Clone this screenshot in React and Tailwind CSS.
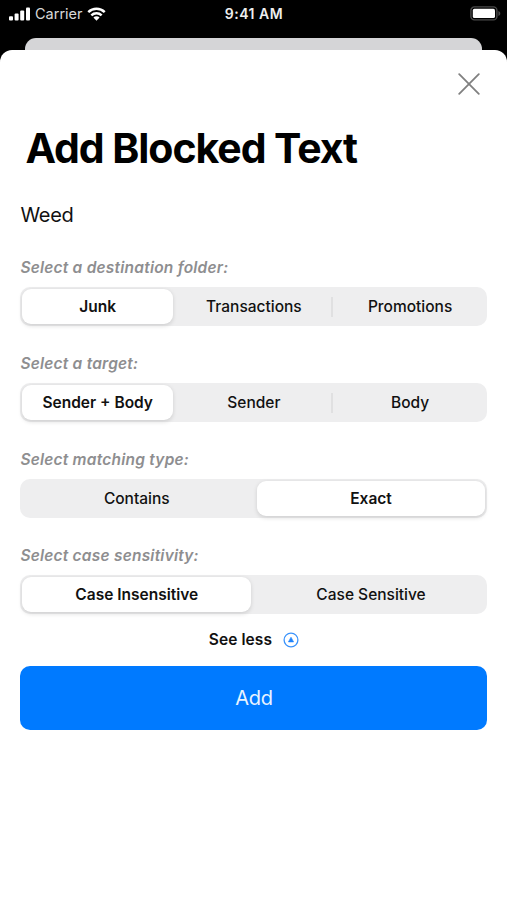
import { useState } from 'react'

const GROUPS = [
  {
    id: 'folder',
    label: 'Select a destination folder:',
    options: ['Junk', 'Transactions', 'Promotions'],
    initial: 0,
  },
  {
    id: 'target',
    label: 'Select a target:',
    options: ['Sender + Body', 'Sender', 'Body'],
    initial: 0,
  },
  {
    id: 'matching',
    label: 'Select matching type:',
    options: ['Contains', 'Exact'],
    initial: 1,
  },
  {
    id: 'case',
    label: 'Select case sensitivity:',
    options: ['Case Insensitive', 'Case Sensitive'],
    initial: 0,
  },
]

function StatusBar() {
  return (
    <div className="grid h-[38px] shrink-0 grid-cols-3 items-start px-[9px] text-white">
      <div className="flex h-[27px] items-center">
        <svg className="h-[14px] w-[22px]" viewBox="0 0 22 14" fill="#fff">
          <rect x="0" y="9.2" width="4" height="4.2" rx="1" />
          <rect x="5.6" y="6.6" width="4" height="6.8" rx="1" />
          <rect x="11.2" y="3.6" width="4" height="9.8" rx="1" />
          <rect x="17" y="0.5" width="4" height="12.9" rx="1" />
        </svg>
        <span className="ml-[4px] text-[14.5px] text-[#d8d8d8]">Carrier</span>
        <svg className="ml-[4px] h-[14px] w-[19px]" viewBox="0 0 20 15" fill="none" stroke="#fff" strokeWidth="2.7">
          <path d="M1.2 5.4a12.6 12.6 0 0 1 17.6 0" />
          <path d="M4.5 8.9a7.9 7.9 0 0 1 11 0" />
          <path d="M10 14.6 6.7 11.3a4.7 4.7 0 0 1 6.6 0Z" fill="#fff" stroke="none" />
        </svg>
      </div>
      <div className="flex h-[27px] items-center justify-center pl-[1px] text-[14px] font-semibold tracking-[0.5px] whitespace-nowrap text-[#eee]">
        9:41 AM
      </div>
      <div className="flex h-[27px] items-center justify-end">
        <svg className="-mr-[3px] h-[15px] w-[31px]" viewBox="0 0 31 15" fill="none">
          <rect x="0.9" y="0.9" width="26" height="13" rx="3.5" stroke="#4a4a4a" strokeWidth="1.4" />
          <rect x="2.8" y="2.8" width="22.2" height="9.2" rx="1.6" fill="#fff" />
          <path d="M28.4 5v5c1.2-.5 1.9-1.4 1.9-2.5S29.6 5.5 28.4 5Z" fill="#4a4a4a" />
        </svg>
      </div>
    </div>
  )
}

function Segmented({ group }) {
  const [active, setActive] = useState(group.initial)

  return (
    <div className="mb-[26px]">
      <p className="mb-[7px] h-[24px] text-[15.5px] leading-[24px] font-semibold tracking-[0.22px] text-[#8e8e90] italic">
        {group.label}
      </p>
      <div className="flex h-[39px] rounded-[10px] bg-[#eeeeef] p-[2px]">
        {group.options.map((option, i) => (
          <div key={option} className="contents">
            {/* Divider only between two inactive segments */}
            {i > 0 && (
              <span className="flex w-[5.5px] shrink-0 items-center justify-center">
                <span className={`h-[20px] w-[2px] ${active === i || active === i - 1 ? 'bg-transparent' : 'bg-[#e0e0e1]'}`} />
              </span>
            )}
            <button
              onClick={() => setActive(i)}
              className={`h-full min-w-0 flex-1 basis-0 rounded-[9px] text-[15.5px] whitespace-nowrap text-[#111] ${
                active === i ? 'bg-white font-semibold shadow-[0_1.5px_4px_rgba(0,0,0,0.13)]' : 'font-medium'
              }`}>
              {option}
            </button>
          </div>
        ))}
      </div>
    </div>
  )
}

function App() {
  return (
    <div className="flex h-[900px] w-[507px] flex-col overflow-hidden bg-black font-['Inter','Liberation_Sans',sans-serif]">
      <StatusBar />

      {/* Edge of the screen behind the sheet */}
      <div className="mx-[25px] h-[12px] shrink-0 rounded-t-[11px] bg-[#d5d5d7]" />

      <main className="flex flex-1 flex-col rounded-t-[12px] bg-white pr-[19.6px] pl-[20.4px]">
        <div className="flex justify-end pt-[23px] pr-[7.9px]">
          <button aria-label="Close">
            <svg className="h-[22px] w-[22px]" viewBox="0 0 22 22" stroke="#808080" strokeWidth="1.8" strokeLinecap="round">
              <path d="M1.2 1.2 20.8 20.8M20.8 1.2 1.2 20.8" />
            </svg>
          </button>
        </div>

        <h1 className="mt-[23px] ml-[5px] h-[60px] text-[41px] leading-[60px] font-bold tracking-[-1.06px] whitespace-nowrap text-black">
          Add Blocked Text
        </h1>
        <p className="mt-[22px] mb-[26px] h-[30px] text-[20px] leading-[30px] tracking-[-0.3px] text-[#111]">Weed</p>

        {GROUPS.map((group) => (
          <Segmented key={group.id} group={group} />
        ))}

        <button className="-mt-[13px] flex h-[26px] items-center justify-center text-[15.5px] font-semibold tracking-[0.1px] text-[#111]">
          See less
          <svg className="ml-[11px] h-[16px] w-[16px]" viewBox="0 0 16 16">
            <circle cx="8" cy="8" r="6.9" fill="none" stroke="#3b93fb" strokeWidth="1.3" />
            <path d="M8 5.2 10.6 9.900H5.4Z" fill="#1f83fb" stroke="#1f83fb" strokeWidth="0.6" strokeLinejoin="round" />
          </svg>
        </button>
        <button className="mt-[13px] h-[64px] rounded-[10px] bg-[#007aff] text-[20px] tracking-[-0.3px] text-[#e8f3ff]">Add</button>
      </main>
    </div>
  )
}

export default App
